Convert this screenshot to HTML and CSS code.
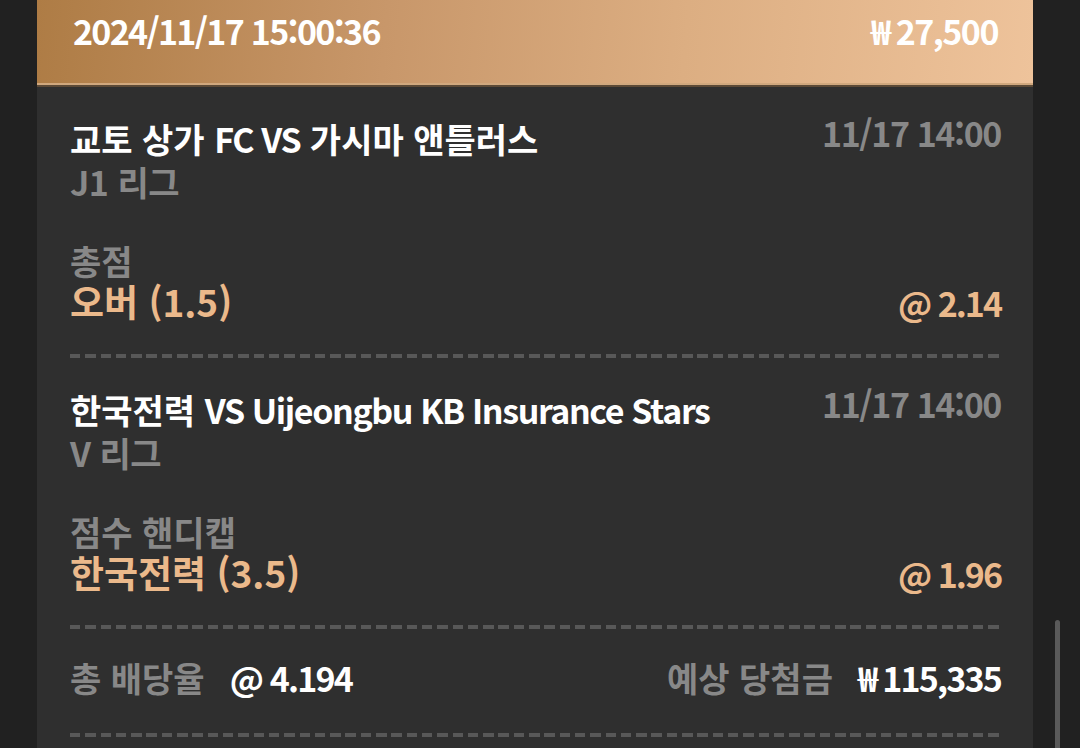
FILE: index.html
```html
<!DOCTYPE html>
<html lang="ko">
<head>
<meta charset="utf-8">
<title>Bet slip</title>
<link rel="stylesheet" href="styles.css">
</head>
<body>
<div class="page">
  <div class="card">
    <div class="card-head">
      <span class="stamp">2024/11/17 15:00:36</span>
      <span class="stake"><span class="won">₩</span>27,500</span>
    </div>
    <div class="match">
      <div class="match-top">
        <div class="teams">
          <div class="title">교토 상가 <span class="lat">FC VS</span> 가시마 앤틀러스</div>
          <div class="league">J1 리그</div>
        </div>
        <div class="time">11/17 14:00</div>
      </div>
      <div class="market">총점</div>
      <div class="pick-row">
        <span class="pick">오버 (1.5)</span>
        <span class="odds">@ 2.14</span>
      </div>
    </div>
    <div class="dash"></div>
    <div class="match">
      <div class="match-top">
        <div class="teams">
          <div class="title">한국전력 <span class="lat">VS Uijeongbu KB Insurance Stars</span></div>
          <div class="league">V 리그</div>
        </div>
        <div class="time">11/17 14:00</div>
      </div>
      <div class="market">점수 핸디캡</div>
      <div class="pick-row">
        <span class="pick">한국전력 (3.5)</span>
        <span class="odds">@ 1.96</span>
      </div>
    </div>
    <div class="dash"></div>
    <div class="summary">
      <div class="sum-item">
        <span class="sum-label">총 배당율</span>
        <span class="sum-value">@ 4.194</span>
      </div>
      <div class="sum-item">
        <span class="sum-label">예상 당첨금</span>
        <span class="sum-value"><span class="won">₩</span>115,335</span>
      </div>
    </div>
    <div class="dash"></div>
  </div>
  <div class="scrollbar"></div>
</div>
</body>
</html>
```
FILE: styles.css
```css
html, body {
  margin: 0;
  padding: 0;
  background: #212121;
  height: 100%;
  overflow: hidden;
}
body {
  font-family: "Noto Sans CJK KR", "Noto Sans", sans-serif;
  font-weight: 700;
  color: #ffffff;
}
.page {
  position: relative;
  height: 748px;
  padding-left: 37px;
}
.card {
  width: 996px;
  height: 748px;
  background: #2f2f2f;
}
.card-head {
  box-sizing: border-box;
  height: 87px;
  padding: 0 35px 23px 36px;
  display: flex;
  justify-content: space-between;
  align-items: center;
  background: linear-gradient(95deg, #ae7c45 0%, #c8976a 35%, #dcae82 65%, #eec39b 100%);
  border-bottom: 2px solid #5c4a37;
  box-shadow: inset 0 -2px 0 #d0a87e;
  font-size: 34px;
  line-height: 44px;
  color: #ffffff;
}
.stamp {
  letter-spacing: -1.7px;
}
.stake {
  letter-spacing: -1.5px;
}
.won {
  margin-right: 6px;
}
.match {
  padding: 0 32px 0 33px;
}
.match-top {
  display: flex;
  justify-content: space-between;
  align-items: flex-start;
  padding-top: 30px;
}
.teams {
  display: flex;
  flex-direction: column;
}
.title {
  font-size: 34px;
  line-height: 43px;
}
.lat {
  letter-spacing: -1.4px;
}
.league {
  font-size: 34px;
  line-height: 43px;
  color: #888888;
  letter-spacing: -0.5px;
}
.time {
  font-size: 34px;
  line-height: 43px;
  color: #888888;
  margin-top: -6px;
  letter-spacing: -1.4px;
}
.market {
  font-size: 34px;
  line-height: 40px;
  color: #888888;
  margin-top: 38px;
}
.pick-row {
  display: flex;
  justify-content: space-between;
  align-items: baseline;
  line-height: 40px;
  padding-bottom: 31px;
}
.pick {
  font-size: 37px;
  color: #ebb98b;
}
.odds {
  font-size: 34px;
  color: #ebb98b;
  letter-spacing: -2px;
}
.dash {
  margin: 0 32px 0 33px;
  height: 4px;
  background: repeating-linear-gradient(90deg, #585858 0 10.5px, transparent 10.5px 15.3px);
}
.summary {
  box-sizing: border-box;
  padding: 0 32px 7px 33px;
  height: 104px;
  display: flex;
  justify-content: space-between;
  align-items: center;
}
.sum-item {
  display: flex;
  align-items: baseline;
  gap: 25px;
}
.sum-label {
  font-size: 34px;
  color: #888888;
}
.sum-value {
  font-size: 34px;
  color: #ffffff;
  letter-spacing: -1.8px;
}
.scrollbar {
  position: absolute;
  left: 1055px;
  top: 620px;
  width: 5px;
  height: 140px;
  border-radius: 3px;
  background: #5a5a5a;
}
```
